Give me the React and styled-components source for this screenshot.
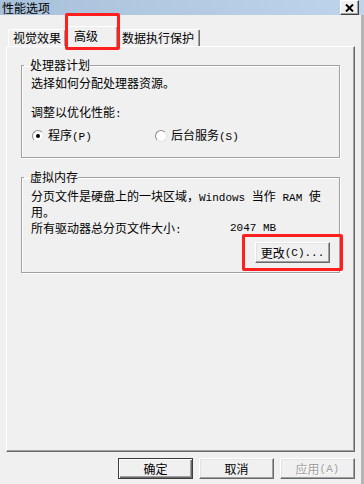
import styled, { createGlobalStyle } from 'styled-components';

const GlobalStyle = createGlobalStyle`
	html, body {
		margin: 0;
		padding: 0;
		background: #f0f0f0;
	}
	body {
		font-family: "Noto Sans CJK SC", "Noto Sans", sans-serif;
		font-size: 12px;
		color: #000000;
	}
	* {
		box-sizing: border-box;
	}
`;

function Radio({ checked }) {
	return <RadioCircle>{checked ? <RadioDot /> : null}</RadioCircle>;
}

function App() {
	return (
		<>
			<GlobalStyle />
			<Window>
				<TitleBar>
					<Title>性能选项</Title>
					<CloseButton>
						<svg width="9" height="8" viewBox="0 0 9 8">
							<path d="M1 0.5 L8 7.5 M8 0.5 L1 7.5" stroke="#000" strokeWidth="2" />
						</svg>
					</CloseButton>
				</TitleBar>
				<Client>
					<TabStrip>
						<Tab width={58} pad={4}>视觉效果</Tab>
						<Tab width={52} pad={7} selected>
							高级
							<TabHighlight />
						</Tab>
						<Tab width={82} pad={3}>数据执行保护</Tab>
					</TabStrip>
					<Panel>
						<Group top={11}>
							<Legend>处理器计划</Legend>
							<Line gap={4}>选择如何分配处理器资源。</Line>
							<Line gap={15}>
								调整以优化性能<Mono>:</Mono>
							</Line>
							<RadioRow>
								<Option>
									<Radio checked />
									<span>
										程序<Mono>(P)</Mono>
									</span>
								</Option>
								<Option>
									<Radio />
									<span>
										后台服务<Mono>(S)</Mono>
									</span>
								</Option>
							</RadioRow>
						</Group>
						<Group top={12} bottom={9}>
							<Legend>虚拟内存</Legend>
							<WrapText>
								分页文件是硬盘上的一块区域，<Mono>Windows </Mono>当作<Mono> RAM </Mono>使
								<br />
								用。
							</WrapText>
							<SizeRow>
								<span>
									所有驱动器总分页文件大小<Mono>:</Mono>
								</span>
								<Mono>2047 MB</Mono>
							</SizeRow>
							<GroupActions>
								<ButtonWrap>
									<Button>
										更改<Mono>(C)...</Mono>
									</Button>
									<ButtonHighlight />
								</ButtonWrap>
							</GroupActions>
						</Group>
					</Panel>
					<Footer>
						<Button primary>确定</Button>
						<Button>取消</Button>
						<Button disabled>
							应用<Mono>(A)</Mono>
						</Button>
					</Footer>
				</Client>
			</Window>
		</>
	);
}

const Window = styled.div`
	display: flex;
	flex-direction: column;
	width: 364px;
	height: 484px;
	background: #f0f0f0;
	overflow: hidden;
`;

const TitleBar = styled.div`
	display: flex;
	align-items: flex-start;
	justify-content: space-between;
	height: 15px;
	padding: 0 5px 0 2px;
	background: linear-gradient(90deg, #a8c0d9, #bed4ec);
`;

const Title = styled.div`
	line-height: 15px;
	font-size: 12px;
`;

const CloseButton = styled.div`
	display: flex;
	align-items: center;
	justify-content: center;
	width: 19px;
	height: 15px;
	background: #f0f0f0;
	border: 1px solid;
	border-color: #ffffff #404040 #404040 #ffffff;
	box-shadow: inset -1px -1px 0 #a0a0a0;
`;

const Client = styled.div`
	display: flex;
	flex-direction: column;
	flex: 1;
	padding: 0 6px;
	border-right: 3px solid #b4b4b4;
`;

const TabStrip = styled.div`
	display: flex;
	align-items: flex-end;
	height: 20px;
	margin: 11px 0 0 2px;
`;

const Tab = styled.div`
	position: relative;
	display: flex;
	align-items: center;
	width: ${(props) => props.width}px;
	height: ${(props) => (props.selected ? 21 : 17)}px;
	margin-bottom: ${(props) => (props.selected ? -1 : 0)}px;
	padding: 0 0 ${(props) => (props.selected ? 3 : 0)}px ${(props) => props.pad}px;
	line-height: 14px;
	white-space: nowrap;
	background: #f0f0f0;
	border: 1px solid;
	border-bottom: none;
	border-color: #ffffff #696969 #ffffff #ffffff;
	border-radius: 2px 2px 0 0;
	box-shadow: inset -1px 0 0 #a0a0a0;
	z-index: ${(props) => (props.selected ? 1 : 0)};
`;

const Highlight = styled.div`
	position: absolute;
	border: 3px solid #ff1f1f;
	border-radius: 2px;
	pointer-events: none;
`;

const TabHighlight = styled(Highlight)`
	left: -2px;
	top: -14px;
	right: -3px;
	bottom: -3px;
`;

const ButtonHighlight = styled(Highlight)`
	left: -13px;
	top: -8px;
	right: -13px;
	bottom: -8px;
`;

const Panel = styled.div`
	display: flex;
	flex-direction: column;
	width: 349px;
	height: 406px;
	padding-left: 14px;
	border: 1px solid;
	border-color: #ffffff #696969 #696969 #ffffff;
	box-shadow: inset -1px -1px 0 #a0a0a0;
`;

const Group = styled.fieldset`
	width: 319px;
	min-width: 0;
	margin: ${(props) => props.top}px 0 0 0;
	padding: 0 9px ${(props) => props.bottom || 13}px 9px;
	border: 1px solid #a0a0a0;
	box-shadow: 1px 1px 0 #ffffff, inset 1px 1px 0 #ffffff;
`;

const Legend = styled.legend`
	margin-left: -7px;
	padding: 0 0 0 6px;
	line-height: 14px;
`;

const Line = styled.div`
	margin-top: ${(props) => props.gap}px;
	line-height: 14px;
	white-space: nowrap;
`;

const WrapText = styled.div`
	margin-top: 5px;
	line-height: 13px;
	white-space: nowrap;
`;

const Mono = styled.span`
	font-family: "Liberation Mono", "DejaVu Sans Mono", monospace;
	font-size: 11px;
`;

const RadioRow = styled.div`
	display: grid;
	grid-template-columns: 123px auto;
	margin: 7px 0 0 1px;
	line-height: 14px;
`;

const Option = styled.div`
	display: flex;
	align-items: center;
	gap: 4px;
`;

const RadioCircle = styled.div`
	display: flex;
	align-items: center;
	justify-content: center;
	width: 12px;
	height: 12px;
	border-radius: 50%;
	background: #ffffff;
	border: 1px solid;
	border-color: #8a8a8a #e4e4e4 #e4e4e4 #8a8a8a;
`;

const RadioDot = styled.div`
	width: 4px;
	height: 4px;
	border-radius: 50%;
	background: #000000;
`;

const SizeRow = styled.div`
	display: grid;
	grid-template-columns: 199px auto;
	margin-top: 3px;
	line-height: 14px;
	white-space: nowrap;
`;

const GroupActions = styled.div`
	display: flex;
	justify-content: flex-end;
	margin-top: 5px;
`;

const ButtonWrap = styled.div`
	position: relative;
	display: flex;
`;

const Button = styled.div`
	display: flex;
	align-items: center;
	justify-content: center;
	width: 75px;
	height: 21px;
	line-height: 14px;
	white-space: nowrap;
	color: ${(props) => (props.disabled ? '#a0a0a0' : '#000000')};
	text-shadow: ${(props) => (props.disabled ? '1px 1px 0 #ffffff' : 'none')};
	background: #f0f0f0;
	border: 1px solid;
	border-color: ${(props) => (props.primary ? '#3c3c3c' : '#ffffff #696969 #696969 #ffffff')};
	box-shadow: ${(props) =>
		props.primary
			? 'inset 1px 1px 0 #ffffff, inset -1px -1px 0 #696969, inset -2px -2px 0 #a0a0a0'
			: 'inset -1px -1px 0 #a0a0a0, inset 1px 1px 0 #e3e3e3'};
`;

const Footer = styled.div`
	display: flex;
	justify-content: flex-end;
	gap: 6px;
	margin-top: 6px;
`;

export default App;
